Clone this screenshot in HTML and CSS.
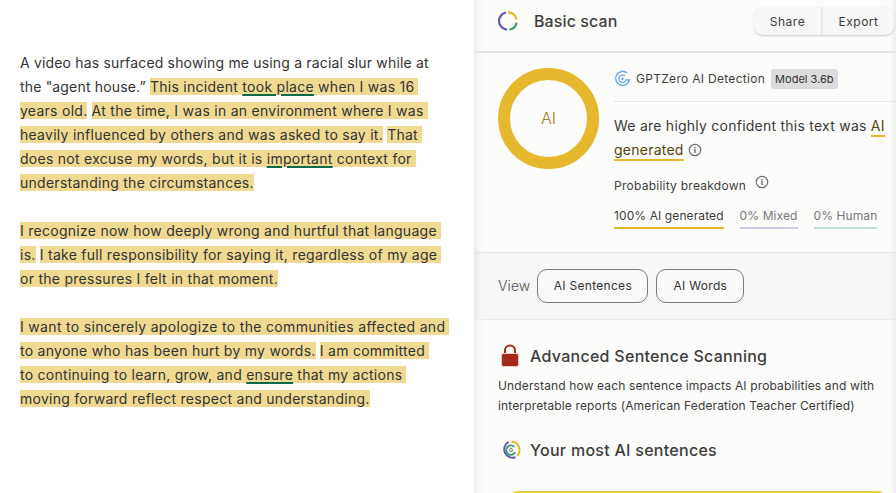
FILE: index.html
```html
<!DOCTYPE html>
<html lang="en">
<head>
<meta charset="utf-8">
<title>Basic scan</title>
<link rel="stylesheet" href="styles.css">
</head>
<body>
<div class="app">
  <main class="doc">
    <p class="para">A video has surfaced showing me using a racial slur while at<br>the "agent house.” <span class="hl end">This incident <u>took place</u> when I was 16</span><br><span class="hl">years old.</span> <span class="hl end">At the time, I was in an environment where I was</span><br><span class="hl">heavily influenced by others and was asked to say it.</span> <span class="hl end">That</span><br><span class="hl end">does not excuse my words, but it is <u>important</u> context for</span><br><span class="hl">understanding the circumstances.</span></p>
    <p class="para"><span class="hl end">I recognize now how deeply wrong and hurtful that language</span><br><span class="hl">is.</span> <span class="hl end">I take full responsibility for saying it, regardless of my age</span><br><span class="hl">or the pressures I felt in that moment.</span></p>
    <p class="para"><span class="hl end wide">I want to sincerely apologize to the communities affected and</span><br><span class="hl">to anyone who has been hurt by my words.</span> <span class="hl end">I am committed</span><br><span class="hl end">to continuing to learn, grow, and <u>ensure</u> that my actions</span><br><span class="hl">moving forward reflect respect and understanding.</span></p>
  </main>
  <aside class="panel">
    <header class="top">
      <div class="top-title">
        <svg class="logo" viewBox="0 0 20 20" width="20" height="20" fill="none" stroke-width="2.2">
          <path d="M10 1.3A8.7 8.7 0 0 1 18.6 8.7" stroke="#e5b82e"/>
          <path d="M18.6 11.5A8.7 8.7 0 0 1 11.5 18.6" stroke="#3f9a6b"/>
          <path d="M9 18.7A8.7 8.7 0 0 1 8 1.5" stroke="#6a57b0"/>
        </svg>
        <span class="scan-name">Basic scan</span>
      </div>
      <div class="actions">
        <button class="act act-first">Share</button>
        <button class="act">Export</button>
      </div>
    </header>
    <section class="summary">
      <div class="ring"><span>AI</span></div>
      <div class="result">
        <div class="det">
          <svg class="det-icon" viewBox="0 0 18 18" width="17" height="17" fill="none" stroke="#62a8f5">
            <path d="M14 3.2A7.4 7.4 0 1 0 16.4 10.5H13" stroke-width="1.5"/>
            <path d="M11.6 6.4A3.9 3.9 0 1 0 12.8 10" stroke-width="1.3"/>
            <circle cx="9" cy="9.2" r="1.3" fill="#62a8f5" stroke="none"/>
          </svg>
          <span class="det-name">GPTZero AI Detection</span>
          <span class="badge">Model 3.6b</span>
        </div>
        <p class="verdict">We are highly confident this text was <span class="mark">AI</span><br><span class="mark">generated</span><svg class="info info-v" viewBox="0 0 14 14" width="14" height="14"><use href="#i"/></svg></p>
        <div class="prob">Probability breakdown<svg class="info info-p" viewBox="0 0 14 14" width="14" height="14"><use href="#i"/></svg></div>
        <div class="stats">
          <span class="stat s-ai">100% AI generated</span>
          <span class="stat s-mix">0% Mixed</span>
          <span class="stat s-hum">0% Human</span>
        </div>
      </div>
    </section>
    <section class="view">
      <span class="view-label">View</span>
      <button class="pill pill-a">AI Sentences</button>
      <button class="pill pill-b">AI Words</button>
    </section>
    <section class="lower">
      <div class="h-row">
        <svg class="lock" viewBox="0 0 20 24" width="20" height="24">
          <path d="M5 11V6.500a5 5 0 0 1 10 0V11" fill="none" stroke="#a32a18" stroke-width="2"/>
          <rect x="1.500" y="9.500" width="17" height="13" rx="2" fill="#a32a18" stroke="#eacdc6"/>
        </svg>
        <h2 class="h-adv">Advanced Sentence Scanning</h2>
      </div>
      <p class="desc">Understand how each sentence impacts AI probabilities and with<br>interpretable reports (American Federation Teacher Certified)</p>
      <div class="h-row h-most">
        <svg class="mini" viewBox="0 0 20 20" width="20" height="20" fill="none">
          <path d="M10.500 1.500A8.500 8.500 0 0 1 16 16" stroke="#e5b82e" stroke-width="2"/>
          <path d="M14.500 17.300A8.500 8.500 0 0 1 7.500 1.900" stroke="#6a57b0" stroke-width="2"/>
          <path d="M13.500 7A4.700 4.700 0 1 0 14.300 12" stroke="#3f9a6b" stroke-width="1.800"/>
          <circle cx="10" cy="10" r="1.500" stroke="#7a7a70" stroke-width="1"/>
        </svg>
        <h2 class="h-most-title">Your most AI sentences</h2>
      </div>
      <div class="card"></div>
    </section>
  </aside>
</div>
<svg class="defs" width="0" height="0">
  <symbol id="i" viewBox="0 0 14 14">
    <circle cx="7" cy="7" r="5.700" fill="none" stroke="#6f6f6f" stroke-width="1.200"/>
    <rect x="6.300" y="6" width="1.400" height="4" fill="#6f6f6f"/>
    <rect x="6.300" y="3.800" width="1.400" height="1.400" fill="#6f6f6f"/>
  </symbol>
</svg>
</body>
</html>
```
FILE: styles.css
```css
* { box-sizing: border-box; }
html, body { margin: 0; padding: 0; height: 100%; overflow: hidden; background: #fff; }
body { font-family: Inter, "Liberation Sans", sans-serif; color: #3a3a3a; }
.defs { position: absolute; }
.app { display: flex; width: 896px; height: 493px; }
.doc { width: 474px; flex: none; padding: 51px 0 0 20px; background: #fff; }
.para { margin: 0 0 24px; font-size: 14px; line-height: 24px; letter-spacing: 0.17px; white-space: nowrap; color: #333; }
.hl { background: #f0da92; letter-spacing: 0.27px; }
.end { padding-right: 4px; }
.wide { letter-spacing: 0.32px; }
u { text-decoration: underline 2px #0b6b48; text-underline-offset: 2px; }
.panel { flex: 1; min-width: 0; background: #fcfcfb; box-shadow: inset 9px 0 8px -8px rgba(0,0,0,.12), inset -9px 0 8px -8px rgba(0,0,0,.1); display: flex; flex-direction: column; overflow: hidden; }
.top { height: 53px; flex: none; border-bottom: 2px solid #e4e4e6; display: flex; justify-content: space-between; align-items: center; padding: 0 2px 9px 24px; }
.top-title { display: flex; align-items: center; gap: 16px; }
.logo { display: block; }
.scan-name { font-size: 16px; font-weight: 500; letter-spacing: 0.1px; color: #404040; }
.actions { display: flex; height: 28px; border-radius: 9px; box-shadow: 0 1px 2px rgba(0,0,0,.2); background: #f7f7f7; }
.act { font: 400 12px Inter, sans-serif; letter-spacing: 0.5px; color: #3a3a3a; background: none; border: 0; padding: 0; width: 71px; }
.act-first { width: 69px; border-right: 2px solid #e8e8e8; }
.summary { height: 200px; flex: none; border-bottom: 1px solid #e4e4ea; display: flex; padding: 15px 0 0 24px; gap: 15px; }
.ring { width: 101px; height: 101px; flex: none; border-radius: 50%; border: 12px solid #e5b82e; display: flex; align-items: center; justify-content: center; font-size: 16px; font-weight: 300; color: #a07e1c; padding-bottom: 1px; }
.result { flex: 1; min-width: 0; }
.det { display: flex; align-items: center; height: 36px; padding-bottom: 10px; border-bottom: 1px solid #e6e6e6; margin-top: -2px; }
.det-icon { display: block; margin-right: 5px; }
.det-name { font-size: 12px; letter-spacing: 0.3px; color: #3f3f3f; margin-right: 6px; }
.badge { font-size: 11px; letter-spacing: 0; background: #dcdcdc; color: #333; border-radius: 3px; padding: 2px 4px; line-height: 16px; }
.verdict { margin: 12px 0 0; font-size: 14px; line-height: 24px; letter-spacing: 0.24px; color: #3a3a3a; white-space: nowrap; }
.mark { border-bottom: 2px solid #e5b82e; color: #57430c; padding-bottom: 1px; }
.info { display: inline-block; }
.info-v { margin-left: 4px; vertical-align: -2px; }
.prob { margin-top: 13px; font-size: 12px; letter-spacing: 0.25px; color: #3d3d3d; line-height: 16px; }
.info-p { margin-left: 9px; vertical-align: 1px; }
.stats { display: flex; gap: 16px; margin-top: 14px; }
.stat { font-size: 12px; letter-spacing: 0.1px; padding-bottom: 4px; border-bottom: 2px solid; line-height: 15px; }
.s-ai { border-color: #e5b82e; color: #3d3d3d; }
.s-mix { border-color: #cfcbe6; color: #777; }
.s-hum { border-color: #bde0d2; color: #777; }
.view { height: 67px; flex: none; background: #f6f6f6; border-bottom: 1px solid #e9e9e9; display: flex; align-items: center; padding: 0 0 0 24px; box-shadow: inset 9px 0 8px -8px rgba(0,0,0,.1), inset -9px 0 8px -8px rgba(0,0,0,.08); }
.view-label { font-size: 14px; font-weight: 300; color: #555; margin-right: 7px; letter-spacing: 0.1px; padding-bottom: 2px; }
.pill { height: 34px; border: 1px solid #7c7c7c; border-radius: 10px; background: #f9f9f9; font: 400 12px Inter, sans-serif; letter-spacing: 0.3px; color: #333; padding: 0 0 2px; }
.pill-a { width: 111px; margin-right: 8px; }
.pill-b { width: 88px; }
.lower { padding: 23px 0 0 24px; flex: 1; }
.h-row { display: flex; align-items: center; gap: 10px; }
.lock { display: block; margin-left: 2px; }
.h-adv, .h-most-title { margin: 0; font-size: 16px; font-weight: 500; letter-spacing: 0.28px; color: #3d3d3d; line-height: 26px; }
.desc { margin: 7px 0 0; font-size: 12px; line-height: 20px; letter-spacing: 0.14px; color: #3a3a3a; white-space: nowrap; }
.h-most { margin-top: 21px; }
.mini { display: block; margin-left: 3px; margin-right: -1px; }
.card { margin: 28px 10px 0 12px; height: 60px; border: 2px solid #ecc84e; border-bottom: 0; border-radius: 8px 8px 0 0; }
```
